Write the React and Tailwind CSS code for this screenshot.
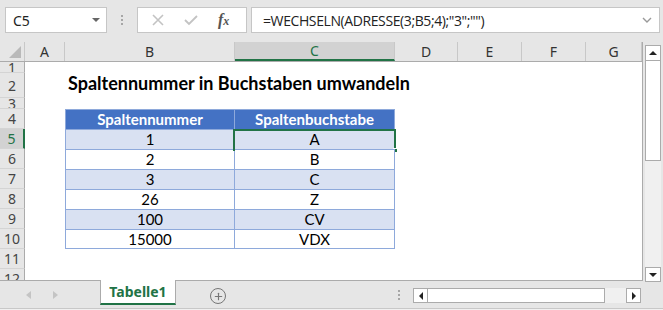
import { Plus } from 'lucide-react';

const cols = [
  { key: 'A', w: 'w-[40px]' },
  { key: 'B', w: 'w-[170px]' },
  { key: 'C', w: 'w-[160px]' },
  { key: 'D', w: 'w-[63px]' },
  { key: 'E', w: 'w-[64px]' },
  { key: 'F', w: 'w-[64px]' },
  { key: 'G', w: 'flex-1' },
];

const data = [
  ['1', 'A'],
  ['2', 'B'],
  ['3', 'C'],
  ['26', 'Z'],
  ['100', 'CV'],
  ['15000', 'VDX'],
];

const cellFont = { fontFamily: 'Lato, "Liberation Sans", sans-serif' };

function RowHead({ n, h, selected }) {
  return (
    <div
      className={`w-[25px] shrink-0 ${h} flex items-center justify-center overflow-hidden border-b border-[#d4d4d4] text-[14px] ${
        selected ? 'bg-[#d2d2d2] text-[#217346] border-r-2 border-r-[#217346]' : 'bg-[#e6e6e6] text-[#444] border-r border-r-[#ababab]'
      }`}
    >
      {n}
    </div>
  );
}

function Spacer() {
  return <div className="w-[40px] shrink-0" />;
}

export default function App() {
  return (
    <div
      className="w-[663px] h-[310px] bg-[#e6e6e6] overflow-hidden flex flex-col select-none"
      style={{ fontFamily: '"Noto Sans", "Open Sans", sans-serif' }}
    >
      {/* formula bar */}
      <div className="h-[42px] shrink-0 flex items-start pt-[7px]">
        <div className="ml-[5px] w-[102px] h-[26px] bg-white border border-[#c6c6c6] flex items-center justify-between pl-[7px] pr-[6px]">
          <span className="text-[14px] text-[#222]">C5</span>
          <span className="w-0 h-0 border-l-[4px] border-r-[4px] border-t-[4px] border-l-transparent border-r-transparent border-t-[#666]" />
        </div>
        <div className="w-[30px] h-[26px] flex flex-col items-center justify-center gap-[2px]">
          <span className="w-[2px] h-[2px] bg-[#a6a6a6]" />
          <span className="w-[2px] h-[2px] bg-[#a6a6a6]" />
          <span className="w-[2px] h-[2px] bg-[#a6a6a6]" />
        </div>
        <div className="w-[110px] h-[26px] bg-white border border-[#c6c6c6] flex items-center">
          <svg width="12" height="12" viewBox="0 0 12 12" className="ml-[14px]">
            <path d="M1 1 L11 11 M11 1 L1 11" stroke="#c3c3c3" strokeWidth="1.6" />
          </svg>
          <svg width="14" height="12" viewBox="0 0 14 12" className="ml-[20px]">
            <path d="M1 6 L5 10 L13 2" stroke="#c3c3c3" strokeWidth="1.8" fill="none" />
          </svg>
          <span className="ml-[20px] text-[16px] italic font-bold text-[#555]" style={{ fontFamily: '"Liberation Serif", serif' }}>
            f<span className="text-[12px]">x</span>
          </span>
        </div>
        <div className="ml-[4px] w-[409px] h-[26px] bg-white border border-[#c6c6c6] flex items-center justify-between pl-[11px] pr-[7px]">
          <span className="text-[14px] text-[#222]" style={{ fontFamily: '"Open Sans", sans-serif', letterSpacing: '-0.4px' }}>
            =WECHSELN(ADRESSE(3;B5;4);"3";"")
          </span>
          <svg width="10" height="6" viewBox="0 0 10 6">
            <path d="M1 1 L5 5 L9 1" stroke="#999" strokeWidth="1.4" fill="none" />
          </svg>
        </div>
      </div>

      {/* sheet + vertical scrollbar */}
      <div className="h-[239px] shrink-0 flex">
        <div className="w-[643px] shrink-0 flex flex-col bg-white border-r border-b border-[#ababab] overflow-hidden">
          {/* column headers */}
          <div className="h-[20px] shrink-0 flex bg-[#e6e6e6] border-b border-[#ababab]">
            <div className="w-[25px] shrink-0 relative border-r border-[#c8c8c8]">
              <svg width="12" height="12" viewBox="0 0 12 12" className="absolute right-[3px] bottom-[3px]">
                <path d="M12 0 L12 12 L0 12 Z" fill="#b9b9b9" />
              </svg>
            </div>
            {cols.map((c) => (
              <div
                key={c.key}
                className={`${c.w} shrink-0 flex items-center justify-center text-[14px] ${
                  c.key === 'C'
                    ? 'bg-[#d2d2d2] text-[#217346] border-b-2 border-[#217346] border-r border-r-[#c8c8c8]'
                    : 'text-[#333] border-r border-[#c8c8c8]'
                }`}
              >
                {c.key}
              </div>
            ))}
          </div>

          {/* row 1 */}
          <div className="flex h-[11px] shrink-0">
            <RowHead n="1" h="h-[11px]" />
          </div>
          {/* row 2: title */}
          <div className="flex h-[25px] shrink-0">
            <RowHead n="2" h="h-[25px]" />
            <Spacer />
            <div className="pl-[3px] flex items-end pb-[1px] whitespace-nowrap text-[18px] font-bold text-black" style={cellFont}>
              Spaltennummer in Buchstaben umwandeln
            </div>
          </div>
          {/* row 3 */}
          <div className="flex h-[11px] shrink-0">
            <RowHead n="3" h="h-[11px]" />
          </div>
          {/* row 4: table header */}
          <div className="flex h-[20px] shrink-0">
            <RowHead n="4" h="h-[20px]" />
            <Spacer />
            <div className="w-[170px] shrink-0 bg-[#4472c4] border-l border-t border-r border-[#8ea9db] flex items-center justify-center text-white font-bold text-[15px]" style={cellFont}>
              Spaltennummer
            </div>
            <div className="w-[160px] shrink-0 bg-[#4472c4] border-t border-r border-[#8ea9db] flex items-center justify-center text-white font-bold text-[15px]" style={cellFont}>
              Spaltenbuchstabe
            </div>
          </div>
          {/* rows 5-10 */}
          {data.map(([num, letter], i) => {
            const alt = i % 2 === 0 ? 'bg-[#d9e1f2]' : 'bg-white';
            const last = i === data.length - 1 ? 'border-b' : '';
            return (
              <div key={num} className="flex h-[20px] shrink-0">
                <RowHead n={String(i + 5)} h="h-[20px]" selected={i === 0} />
                <Spacer />
                <div className={`w-[170px] shrink-0 ${alt} border-l border-t border-r ${last} border-[#8ea9db] flex items-center justify-center text-[15px] text-black`} style={cellFont}>
                  {num}
                </div>
                <div className={`w-[160px] shrink-0 ${alt} border-t border-r ${last} border-[#8ea9db] flex items-center justify-center text-[15px] text-black relative`} style={cellFont}>
                  {letter}
                  {i === 0 && (
                    <>
                      <div className="absolute -left-[2px] -top-[1px] -right-[2px] -bottom-[2px] border-2 border-[#217346]" />
                      <div className="absolute -right-[4px] -bottom-[4px] w-[5px] h-[5px] bg-[#217346] border border-white" />
                    </>
                  )}
                </div>
              </div>
            );
          })}
          {/* row 11 */}
          <div className="flex h-[20px] shrink-0">
            <RowHead n="11" h="h-[20px]" />
          </div>
          {/* row 12 */}
          <div className="flex h-[20px] shrink-0">
            <RowHead n="12" h="h-[20px]" />
          </div>
        </div>

        {/* vertical scrollbar */}
        <div className="flex-1 flex flex-col items-center pt-[3px]">
          <div className="w-[16px] h-[16px] bg-white border border-[#ababab] flex items-center justify-center">
            <span className="w-0 h-0 border-l-[4px] border-r-[4px] border-b-[4px] border-l-transparent border-r-transparent border-b-[#222]" />
          </div>
          <div className="w-[16px] h-[100px] bg-white border border-t-0 border-[#ababab]" />
          <div className="w-[16px] flex-1 bg-[#f0f0f0]" />
          <div className="w-[16px] h-[15px] bg-white border border-[#ababab] flex items-center justify-center mb-[-1px]">
            <span className="w-0 h-0 border-l-[4px] border-r-[4px] border-t-[4px] border-l-transparent border-r-transparent border-t-[#222]" />
          </div>
        </div>
      </div>

      {/* sheet tabs + horizontal scrollbar */}
      <div className="flex-1 flex relative">
        <div className="w-[100px] flex items-start pt-[10px] pl-[26px] gap-[22px]">
          <span className="w-0 h-0 border-t-[4px] border-b-[4px] border-r-[5px] border-t-transparent border-b-transparent border-r-[#c4c4c4]" />
          <span className="w-0 h-0 border-t-[4px] border-b-[4px] border-l-[5px] border-t-transparent border-b-transparent border-l-[#c4c4c4]" />
        </div>
        <div className="w-[76px] h-[25px] -mt-[1px] bg-white border-l border-r border-[#ababab] border-b-2 border-b-[#217346] flex items-center justify-center">
          <span className="text-[14px] font-bold text-[#217346]">Tabelle1</span>
        </div>
        <div className="ml-[34px] mt-[7px] w-[16px] h-[16px] rounded-full border-[1.5px] border-[#767676] flex items-center justify-center">
          <Plus size={11} strokeWidth={2.5} color="#767676" />
        </div>
        <div className="ml-[172px] mt-[9px] flex flex-col gap-[2px]">
          <span className="w-[2px] h-[2px] bg-[#a6a6a6]" />
          <span className="w-[2px] h-[2px] bg-[#a6a6a6]" />
          <span className="w-[2px] h-[2px] bg-[#a6a6a6]" />
        </div>
        <div className="ml-[13px] mt-[7px] h-[15px] flex">
          <div className="w-[15px] h-[15px] bg-white border border-[#ababab] flex items-center justify-center">
            <span className="w-0 h-0 border-t-[4px] border-b-[4px] border-r-[4px] border-t-transparent border-b-transparent border-r-[#222]" />
          </div>
          <div className="w-[177px] h-[15px] bg-white border border-l-0 border-[#ababab]" />
          <div className="w-[21px] h-[15px] bg-[#f0f0f0]" />
          <div className="w-[15px] h-[15px] bg-white border border-[#ababab] flex items-center justify-center">
            <span className="w-0 h-0 border-t-[4px] border-b-[4px] border-l-[4px] border-t-transparent border-b-transparent border-l-[#222]" />
          </div>
        </div>
        <div className="absolute left-0 right-0 bottom-0 h-[2px] border-t border-[#c8c8c8] bg-[#f0f0f0]" />
      </div>
    </div>
  );
}
